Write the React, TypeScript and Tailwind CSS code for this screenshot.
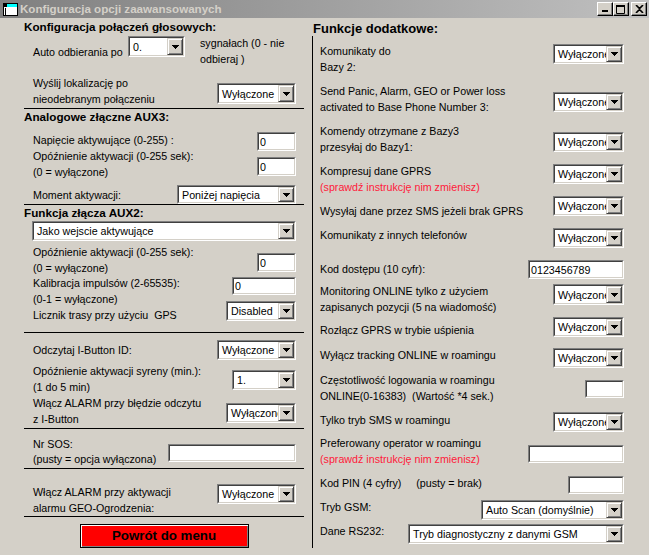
import type { ReactNode } from 'react';

const sunken = 'border border-t-[#808080] border-l-[#808080] border-b-white border-r-white';
const sunkenInner = 'border border-t-[#404040] border-l-[#404040] border-b-[#d4d0c8] border-r-[#d4d0c8]';
const raised =
  'border border-t-[#d4d0c8] border-l-[#d4d0c8] border-b-[#404040] border-r-[#404040] shadow-[inset_1px_1px_0_#ffffff,inset_-1px_-1px_0_#808080] bg-[#d4d0c8]';

function Arrow() {
  return (
    <svg width="7" height="4" viewBox="0 0 7 4">
      <path d="M0 0h7v1h-1v1h-1v1h-1v1h-1v-1h-1v-1h-1v-1h-1z" fill="#000" />
    </svg>
  );
}

function Combo({ value, className }: { value: string; className: string }) {
  return (
    <div className={`flex shrink-0 bg-white ${sunken} ${className}`}>
      <div className={`flex flex-1 min-w-0 ${sunkenInner}`}>
        <span className="flex flex-1 min-w-0 items-center overflow-hidden whitespace-nowrap pl-[3px]">{value}</span>
        <span className={`flex w-[16px] shrink-0 items-center justify-center ${raised}`}>
          <Arrow />
        </span>
      </div>
    </div>
  );
}

function Field({ value = '', className }: { value?: string; className: string }) {
  return (
    <div className={`shrink-0 bg-white ${sunken} ${className}`}>
      <div className={`flex h-full items-center pl-[1px] ${sunkenInner}`}>{value}</div>
    </div>
  );
}

function Line() {
  return <div className="h-px bg-black" />;
}

function Red({ children }: { children: ReactNode }) {
  return <span className="text-[#ff1a3a]">{children}</span>;
}

function TitleButton({ children }: { children: ReactNode }) {
  return (
    <div className="flex h-[14px] w-[16px] items-center justify-center border border-t-white border-l-white border-b-black border-r-black bg-[#d4d0c8] shadow-[inset_-1px_-1px_0_#808080]">
      {children}
    </div>
  );
}

export default function App() {
  return (
    <div className="h-[555px] w-[649px] overflow-hidden bg-[#d4d0c8] font-['Liberation_Sans',Arial,sans-serif] text-[10.7px] leading-[16px] text-black">
      {/* Title bar */}
      <div className="flex h-[18px] items-center bg-linear-to-r from-[#808080] to-[#c0c0c0] pl-[3px] pr-[2px]">
        <svg width="15" height="13" viewBox="0 0 15 13" className="shrink-0">
          <rect x="0.5" y="0.5" width="14" height="12" fill="#fff" stroke="#000" />
          <rect x="1" y="1" width="13" height="3" fill="#00ffff" />
          <rect x="1" y="1" width="3" height="3" fill="#000" />
          <rect x="2" y="5" width="1" height="7" fill="#000" />
        </svg>
        <span className="ml-[2px] flex-1 text-[11.6px] font-bold text-[#d4d0c8]">Konfiguracja opcji zaawansowanych</span>
        <TitleButton>
          <svg width="8" height="8" viewBox="0 0 8 8">
            <rect x="1" y="5" width="6" height="2" fill="#000" />
          </svg>
        </TitleButton>
        <TitleButton>
          <svg width="10" height="9" viewBox="0 0 10 9">
            <path d="M0.5 1.5h8v7h-8z" fill="none" stroke="#000" />
            <rect x="0" y="0" width="9" height="2" fill="#000" />
          </svg>
        </TitleButton>
        <div className="ml-[2px]">
          <TitleButton>
            <svg width="9" height="8" viewBox="0 0 9 8">
              <path d="M1 0l3.5 3.5L8 0M1 8l3.5-3.5L8 8" fill="none" stroke="#000" strokeWidth="1.6" />
            </svg>
          </TitleButton>
        </div>
      </div>

      <div className="flex">
        {/* Left column */}
        <div className="w-[313px] shrink-0 pl-[24px]">
          <div className="h-[18px] pt-[1px] text-[11.7px] font-bold">Konfiguracja połączeń głosowych:</div>
          <div className="h-[512px] border-r border-black pr-[8px]">
            <div className="flex h-[39px] pl-[9px]">
              <div className="mt-[8px] w-[95px]">Auto odbierania po</div>
              <Combo value="0." className="h-[21px] w-[57px]" />
              <div className="ml-[15px] -mt-px">
                sygnałach (0 - nie
                <br />
                odbieraj )
              </div>
            </div>
            <div className="flex h-[33px] justify-between pl-[9px] pr-[8px]">
              <div>
                Wyślij lokalizację po
                <br />
                nieodebranym połączeniu
              </div>
              <Combo value="Wyłączone" className="mt-[8px] h-[21px] w-[79px]" />
            </div>
            <Line />

            <div className="h-[19px] text-[11.7px] font-bold">Analogowe złączne AUX3:</div>
            <div className="flex h-[20px] justify-between pl-[9px] pr-[8px]">
              <div className="mt-[4px]">Napięcie aktywujące (0-255) :</div>
              <Field value="0" className="mt-[4px] h-[19px] w-[39px]" />
            </div>
            <div className="flex h-[32px] justify-between pl-[9px] pr-[8px]">
              <div>
                Opóźnienie aktywacji (0-255 sek):
                <br />
                (0 = wyłączone)
              </div>
              <Field value="0" className="mt-[9px] h-[19px] w-[39px]" />
            </div>
            <div className="flex h-[24px] justify-between pl-[9px] pr-[8px]">
              <div className="mt-[7px]">Moment aktywacji:</div>
              <Combo value="Poniżej napięcia" className="mt-[5px] h-[19px] w-[119px]" />
            </div>
            <Line />

            <div className="h-[16px] text-[11.7px] font-bold">Funkcja złącza AUX2:</div>
            <div className="flex h-[23px] pl-[8px] pr-[8px]">
              <Combo value="Jako wejscie aktywujące" className="h-[20px] flex-1" />
            </div>
            <div className="flex h-[31px] justify-between pl-[9px] pr-[8px]">
              <div>
                Opóźnienie aktywacji (0-255 sek):
                <br />
                (0 = wyłączone)
              </div>
              <Field value="0" className="mt-[9px] h-[19px] w-[39px]" />
            </div>
            <div className="flex h-[16px] justify-between pl-[9px] pr-[8px]">
              <div>Kalibracja impulsów (2-65535):</div>
              <Field value="0" className="mt-[2px] h-[18px] w-[64px]" />
            </div>
            <div className="flex h-[41px] justify-between pl-[9px] pr-[8px]">
              <div>
                (0-1 = wyłączone)
                <br />
                Licznik trasy przy użyciu&nbsp; GPS
              </div>
              <Combo value="Disabled" className="mt-[10px] h-[20px] w-[70px]" />
            </div>
            <Line />

            <div className="flex h-[30px] justify-between pl-[9px] pr-[8px]">
              <div className="mt-[9px]">Odczytaj I-Button ID:</div>
              <Combo value="Wyłączone" className="mt-[7px] h-[20px] w-[79px]" />
            </div>
            <div className="flex h-[32px] justify-between pl-[9px] pr-[8px]">
              <div>
                Opóźnienie aktywacji syreny (min.):
                <br />
                (1 do 5 min)
              </div>
              <Combo value="1." className="mt-[7px] h-[20px] w-[64px]" />
            </div>
            <div className="flex h-[33px] justify-between pl-[9px] pr-[8px]">
              <div>
                Włącz ALARM przy błędzie odczytu
                <br />z I-Button
              </div>
              <Combo value="Wyłączone" className="mt-[8px] h-[20px] w-[70px]" />
            </div>
            <Line />

            <div className="flex h-[39px] justify-between pl-[9px] pr-[8px]">
              <div className="mt-[8px] leading-[15px]">
                Nr SOS:
                <br />
                (pusty = opcja wyłączona)
              </div>
              <Field className="mt-[15px] h-[18px] w-[128px]" />
            </div>
            <Line />

            <div className="flex h-[47px] justify-between pl-[9px] pr-[8px]">
              <div className="mt-[15px]">
                Włącz ALARM przy aktywacji
                <br />
                alarmu GEO-Ogrodzenia:
              </div>
              <Combo value="Wyłączone" className="mt-[15px] h-[20px] w-[79px]" />
            </div>
            <Line />

            <div className="flex justify-center pt-[7px]">
              <button className="flex h-[24px] w-[169px] items-center justify-center border border-black bg-[#ff0000] text-[13.3px] font-bold shadow-[inset_1px_1px_0_#ffffff,inset_-1px_-1px_0_#808080]">
                Powrót do menu
              </button>
            </div>
          </div>
        </div>

        {/* Right column */}
        <div className="flex-1">
          <div className="h-[25px] pt-[3px] text-[13px] font-bold">Funkcje dodatkowe:</div>
          <div className="pl-[7px] pr-[25px]">
            <div className="flex h-[40px] justify-between">
              <div>
                Komunikaty do
                <br />
                Bazy 2:
              </div>
              <Combo value="Wyłączone" className="mt-[1px] h-[20px] w-[71px]" />
            </div>
            <div className="flex h-[40px] justify-between">
              <div>
                Send Panic, Alarm, GEO or Power loss
                <br />
                activated to Base Phone Number 3:
              </div>
              <Combo value="Wyłączone" className="mt-[9px] h-[20px] w-[71px]" />
            </div>
            <div className="flex h-[40px] justify-between">
              <div>
                Komendy otrzymane z Bazy3
                <br />
                przesyłaj do Bazy1:
              </div>
              <Combo value="Wyłączone" className="mt-[9px] h-[20px] w-[71px]" />
            </div>
            <div className="flex h-[32px] justify-between">
              <div>
                Kompresuj dane GPRS
                <br />
                <Red>(sprawdź instrukcję nim zmienisz)</Red>
              </div>
              <Combo value="Wyłączone" className="mt-[1px] h-[20px] w-[71px]" />
            </div>
            <div className="flex h-[32px] justify-between">
              <div className="mt-[8px]">Wysyłaj dane przez SMS jeżeli brak GPRS</div>
              <Combo value="Wyłączone" className="mt-[1px] h-[20px] w-[71px]" />
            </div>
            <div className="flex h-[33px] justify-between">
              <div>Komunikaty z innych telefonów</div>
              <Combo value="Wyłączone" className="mt-[1px] h-[20px] w-[71px]" />
            </div>
            <div className="flex h-[23px] justify-between">
              <div className="mt-[1px]">Kod dostępu (10 cyfr):</div>
              <Field value="0123456789" className="h-[19px] w-[96px]" />
            </div>
            <div className="flex h-[32px] justify-between">
              <div>
                Monitoring ONLINE tylko z użyciem
                <br />
                zapisanych pozycji (5 na wiadomość)
              </div>
              <Combo value="Wyłączone" className="mt-[1px] h-[21px] w-[71px]" />
            </div>
            <div className="flex h-[32px] justify-between">
              <div className="mt-[7px]">Rozłącz GPRS w trybie uśpienia</div>
              <Combo value="Wyłączone" className="mt-[2px] h-[20px] w-[71px]" />
            </div>
            <div className="flex h-[25px] justify-between">
              <div>Wyłącz tracking ONLINE w roamingu</div>
              <Combo value="Wyłączone" className="mt-[1px] h-[20px] w-[71px]" />
            </div>
            <div className="flex h-[32px] justify-between">
              <div>
                Częstotliwość logowania w roamingu
                <br />
                ONLINE(0-16383)&nbsp; (Wartość *4 sek.)
              </div>
              <Field className="mt-[8px] h-[18px] w-[39px]" />
            </div>
            <div className="flex h-[31px] justify-between">
              <div className="mt-[8px]">Tylko tryb SMS w roamingu</div>
              <Combo value="Wyłączone" className="mt-[8px] h-[20px] w-[71px]" />
            </div>
            <div className="flex h-[32px] justify-between">
              <div>
                Preferowany operator w roamingu
                <br />
                <Red>(sprawdź instrukcję nim zmienisz)</Red>
              </div>
              <Field className="mt-[10px] h-[18px] w-[96px]" />
            </div>
            <div className="flex h-[32px] justify-between">
              <div className="mt-[8px]">Kod PIN (4 cyfry)&nbsp;&nbsp;&nbsp;&nbsp; (pusty = brak)</div>
              <Field className="mt-[9px] h-[18px] w-[56px]" />
            </div>
            <div className="flex h-[24px] justify-between">
              <div>Tryb GSM:</div>
              <Combo value="Auto Scan (domyślnie)" className="mt-[1px] h-[20px] w-[143px]" />
            </div>
            <div className="flex h-[25px] justify-between">
              <div>Dane RS232:</div>
              <Combo value="Tryb diagnostyczny z danymi GSM" className="mt-[1px] h-[20px] w-[216px]" />
            </div>
          </div>
        </div>
      </div>
    </div>
  );
}
